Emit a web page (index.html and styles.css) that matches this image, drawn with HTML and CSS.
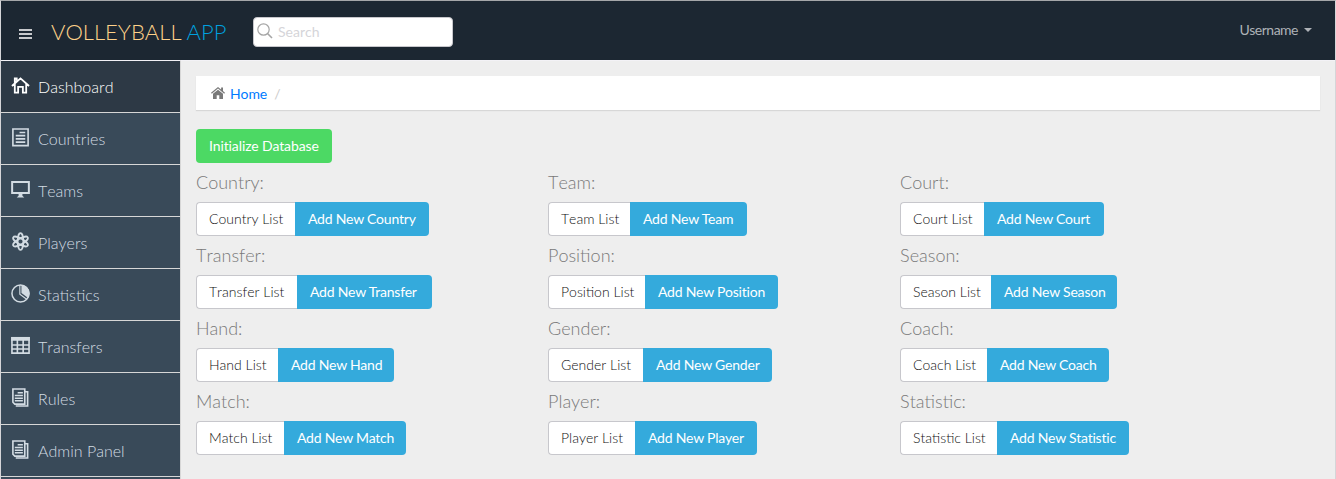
FILE: index.html
```html
<!DOCTYPE html>
<html lang="en">
<head>
<meta charset="utf-8">
<title>Volleyball App</title>
<link rel="stylesheet" href="styles.css">
</head>
<body>
<svg width="0" height="0" class="defs">
  <symbol id="docs" viewBox="0 0 20 20"><path d="M2 1h12.500v16H4L2 15zM5 19h12.500V4H15" fill="none" stroke="currentColor" stroke-width="1.700"/><path d="M7 5h5.500M4 8h8.500M4 10.700h8.500M4 13.500h8.500" stroke="currentColor" stroke-width="1.600"/></symbol>
</svg>
<header class="header">
  <svg class="menu" viewBox="0 0 14 10"><path d="M0 1h13M0 5h13M0 9h13" stroke="currentColor" stroke-width="1.500"/></svg>
  <a class="logo">VOLLEYBALL <span>APP</span></a>
  <div class="search">
    <svg viewBox="0 0 16 16" width="16" height="16"><circle cx="6.500" cy="6.500" r="5.700"/><path d="M10.500 10.500l4.500 4.500" stroke-width="1.600"/></svg>
    <span>Search</span>
  </div>
  <div class="user">Username<i class="caret"></i></div>
</header>
<div class="body">
  <nav class="sidebar">
    <a class="item active"><svg viewBox="0 0 20 20"><path d="M1 10.500L10 2.500l9 8M4 8.500v9h3.500v-6h5v6H16v-9M4 7V2.500h2V5" fill="none" stroke="currentColor" stroke-width="1.900"/></svg>Dashboard</a>
    <a class="item"><svg viewBox="0 0 20 20"><path d="M2 1h16v17.500H2z" fill="none" stroke="currentColor" stroke-width="1.700"/><path d="M9 4.700h6M5 8h10M5 11.500h10M5 14.900h10" stroke="currentColor" stroke-width="1.700"/></svg>Countries</a>
    <a class="item"><svg viewBox="0 0 20 20"><path d="M1.200 2.200h17.600v11.500H1.200z" fill="none" stroke="currentColor" stroke-width="2.100"/><path d="M8 14h4v2.500l2 2H6l2-2z" fill="currentColor"/></svg>Teams</a>
    <a class="item"><svg viewBox="0 0 20 20" fill="none" stroke="currentColor" stroke-width="1.800"><ellipse cx="10" cy="10" rx="3" ry="8.800"/><ellipse cx="10" cy="10" rx="3" ry="8.800" transform="rotate(60 10 10)"/><ellipse cx="10" cy="10" rx="3" ry="8.800" transform="rotate(120 10 10)"/></svg>Players</a>
    <a class="item"><svg viewBox="0 0 20 20"><circle cx="10" cy="10" r="9" fill="none" stroke="currentColor" stroke-width="1.600"/><path d="M11 9.500V1a9 9 0 0 1 7 13.800z" fill="currentColor"/><path d="M9.300 1v9.700l7.200 5.300" fill="none" stroke="currentColor" stroke-width="1.200"/></svg>Statistics</a>
    <a class="item"><svg viewBox="0 0 20 20"><path d="M1 2h18v16H1zM1 9.500h18M1 13.700h18M6.700 3v15M12.800 3v15" fill="none" stroke="currentColor" stroke-width="1.700"/><path d="M.2 1h19.600v4H.2z" fill="currentColor"/></svg>Transfers</a>
    <a class="item"><svg><use href="#docs"/></svg>Rules</a>
    <a class="item"><svg><use href="#docs"/></svg>Admin Panel</a>
    <a class="item"></a>
  </nav>
  <main class="content">
    <div class="breadcrumb"><svg viewBox="0 0 14 12" width="14" height="12"><path d="M7 2.700l5 4.100V12H8.300V8.300H5.700V12H2V6.800z"/><path d="M7 0L0 5.800l.8.900L7 1.600l6.200 5.100.8-.9-2-1.700V.600h-1.900v2z"/></svg><a>Home</a><span>/</span></div>
    <a class="btn success">Initialize Database</a>
    <div class="grid">
      <section><h4>Country:</h4><div class="group country"><a class="btn plain">Country List</a><a class="btn info">Add New Country</a></div></section>
      <section><h4>Team:</h4><div class="group team"><a class="btn plain">Team List</a><a class="btn info">Add New Team</a></div></section>
      <section><h4>Court:</h4><div class="group court"><a class="btn plain">Court List</a><a class="btn info">Add New Court</a></div></section>
      <section><h4>Transfer:</h4><div class="group transfer"><a class="btn plain">Transfer List</a><a class="btn info">Add New Transfer</a></div></section>
      <section><h4>Position:</h4><div class="group position"><a class="btn plain">Position List</a><a class="btn info">Add New Position</a></div></section>
      <section><h4>Season:</h4><div class="group season"><a class="btn plain">Season List</a><a class="btn info">Add New Season</a></div></section>
      <section><h4>Hand:</h4><div class="group hand"><a class="btn plain">Hand List</a><a class="btn info">Add New Hand</a></div></section>
      <section><h4>Gender:</h4><div class="group gender"><a class="btn plain">Gender List</a><a class="btn info">Add New Gender</a></div></section>
      <section><h4>Coach:</h4><div class="group coach"><a class="btn plain">Coach List</a><a class="btn info">Add New Coach</a></div></section>
      <section><h4>Match:</h4><div class="group match"><a class="btn plain">Match List</a><a class="btn info">Add New Match</a></div></section>
      <section><h4>Player:</h4><div class="group player"><a class="btn plain">Player List</a><a class="btn info">Add New Player</a></div></section>
      <section><h4>Statistic:</h4><div class="group statistic"><a class="btn plain">Statistic List</a><a class="btn info">Add New Statistic</a></div></section>
    </div>
  </main>
</div>
</body>
</html>
```
FILE: styles.css
```css
* { box-sizing: border-box; }
body {
  margin: 0;
  height: 479px;
  overflow: hidden;
  display: flex;
  flex-direction: column;
  background: #eee;
  border: 1px solid #d5d5d8;
  border-top-color: #a5a7a9;
  border-bottom: 0;
  font: 300 14px/20px Lato, sans-serif;
  font-kerning: none;
  color: #797979;
}
.defs { position: absolute; }
.header {
  flex: none;
  display: flex;
  align-items: center;
  height: 59px;
  padding: 0 23px 0 18px;
  background: #1c2732;
}
.menu { width: 14px; height: 10px; margin-top: 6px; color: #fff; }
.logo { margin-left: 18px; padding-top: 3px; width: 202px; font-size: 22px; line-height: 30px; color: #fed189; white-space: nowrap; }
.logo span { margin-left: -1px; color: #00a0df; }
.search {
  display: flex;
  gap: 4px;
  width: 200px;
  height: 30px;
  margin-top: 3px;
  padding: 4px 3px;
  background: #fff;
  border: 1px solid #c7c7cc;
  border-radius: 4px;
  font-weight: 400;
  color: #d5d5d9;
}
.search span { margin-left: 1px; }
.search svg { margin-top: 1px; fill: none; stroke: #a5a5a5; stroke-width: 1.2; }
.user { display: flex; align-items: center; gap: 6px; margin: -1px 0 0 auto; font-size: 14px; font-weight: 400; letter-spacing: -0.5px; color: #aeb2b7; }
.caret { border: 4px solid transparent; border-top-color: #aeb2b7; border-bottom: 0; }
.body { flex: 1; min-height: 0; display: flex; }
.sidebar { flex: none; width: 180px; overflow: hidden; border-top: 1px solid #f3f2f6; border-right: 1px solid #d7d7d7; background: #394a59; }
.item {
  display: flex;
  align-items: center;
  gap: 8px;
  height: 52px;
  padding: 1px 0 0 10px;
  border-bottom: 1px solid #d7d7d7;
  font-size: 16px;
  color: #d3dce3;
}
.item svg { width: 19px; height: 19px; margin-top: -4px; }
.item.active { background: #2d3945; color: #fff; }
.content { flex: 1; padding: 16px 15px 0; border-top: 1px solid #f3f2f6; }
.breadcrumb {
  display: flex;
  align-items: center;
  height: 34px;
  margin: -1px 0 19px;
  padding: 2px 15px 0;
  background: #fff;
  box-shadow: 0 1px 1px #d7d7d7;
  font-weight: 400;
}
.breadcrumb svg { fill: #797979; margin: -2px 5px 0 0; }
.breadcrumb a { color: #007aff; letter-spacing: -0.1px; }
.breadcrumb span { margin-left: 7px; color: #ccc; }
.btn {
  display: block;
  height: 34px;
  padding: 6px 0 6px 12px;
  border: 1px solid transparent;
  border-radius: 4px;
  white-space: nowrap;
}
.success, .info { font-weight: 400; font-kerning: normal; letter-spacing: -0.2px; color: #fff; }
.success { width: 136px; background: #4cd964; letter-spacing: -0.1px; }
.grid { display: grid; grid-template-columns: repeat(3, 352px); grid-auto-rows: 73px; margin-top: 9px; }
h4 { margin: 0 0 10px; font-size: 18px; line-height: 20px; font-weight: 300; }
.group { display: grid; }
.plain { background: #fff; border-color: #c7c7cc; border-right: 0; color: #111; border-radius: 4px 0 0 4px; }
.info { background: #34aadc; border-radius: 0 4px 4px 0; }
.country { grid-template-columns: 99px 134px; }
.team { grid-template-columns: 82px 117px; }
.court { grid-template-columns: 84px 120px; }
.transfer { grid-template-columns: 101px 135px; }
.position { grid-template-columns: 97px 133px; }
.season { grid-template-columns: 91px 126px; }
.hand { grid-template-columns: 82px 116px; }
.gender { grid-template-columns: 95px 129px; }
.coach { grid-template-columns: 87px 122px; }
.match { grid-template-columns: 88px 122px; }
.player { grid-template-columns: 87px 122px; }
.statistic { grid-template-columns: 97px 132px; }
```
